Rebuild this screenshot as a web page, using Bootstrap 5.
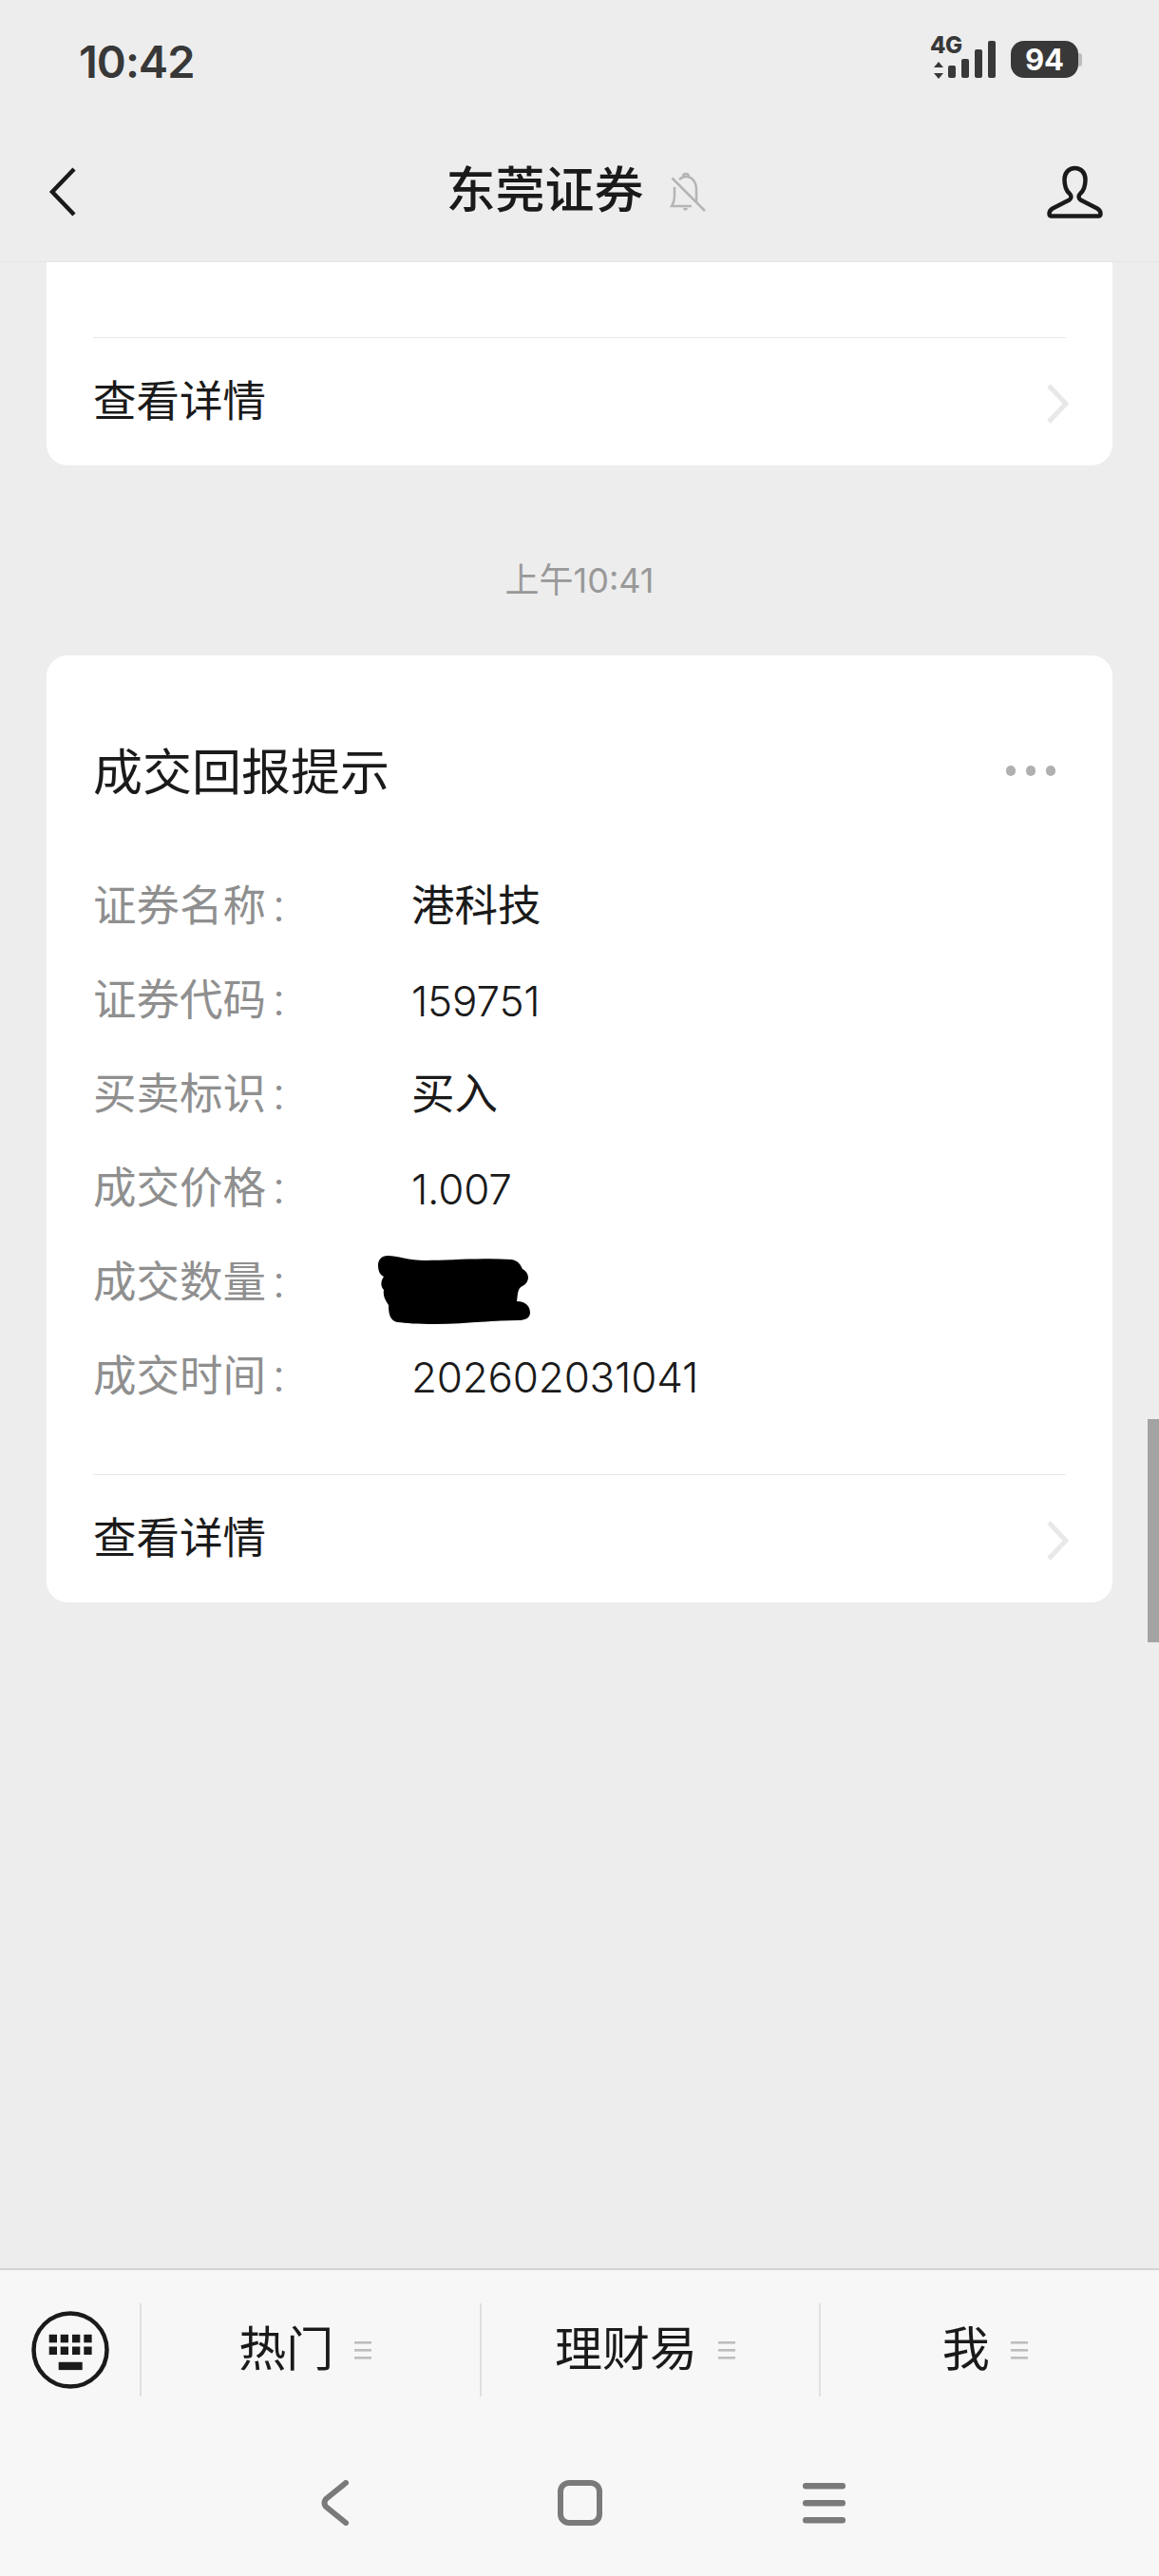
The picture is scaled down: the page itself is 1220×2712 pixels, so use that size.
<!DOCTYPE html>
<html lang="zh-CN">
<head>
  <meta charset="UTF-8" />
  <meta name="viewport" content="width=device-width, initial-scale=1.0" />
  <title>东莞证券</title>
  <link rel="stylesheet" href="https://cdn.jsdelivr.net/npm/bootstrap@5.3.0/dist/css/bootstrap.min.css">
  <style>
    body {
      width: 1220px;
      height: 2712px;
      overflow: hidden;
      background: #ededed;
      color: #1a1a1a;
      font-family: Roboto, "Noto Sans CJK SC", sans-serif;
    }
    .status-bar { height: 128px; padding: 0 81px 0 83px; }
    .status-time { font-family: Inter, sans-serif; font-size: 47px; font-weight: 600; color: #383838; line-height: 1; letter-spacing: -1px; }
    .battery {
      width: 71px; height: 39px; margin: 0 4px 3px 16px;
      background: #383838; border-radius: 14px;
      color: #fff; font-family: Inter, sans-serif; font-size: 31px; font-weight: 700; line-height: 1;
    }
    .battery::after {
      content: ""; position: absolute; right: -4px; top: 13px;
      width: 4px; height: 14px; background: #bdbdbd; border-radius: 0 3px 3px 0;
    }
    .chat-nav { height: 148px; border-bottom: 1px solid #e4e4e4; padding: 0 57px 0 50px; }
    .chat-nav-side { width: 120px; }
    .chat-title { font-size: 52px; font-weight: 500; line-height: 1; margin-right: 26px; }
    .msg-list { padding: 0 49px; overflow: hidden; }
    .msg-card { border: 0; border-radius: 22px; background: #fff; }
    .msg-card-first { border-radius: 0 0 22px 22px; padding-top: 79px; }
    .msg-time { height: 200px; padding-top: 100px; font-family: Inter, "Noto Sans CJK SC", sans-serif; font-size: 36px; line-height: 42px; color: #999; }
    .msg-head { padding: 95px 49px 0 49px; height: 214px; }
    .msg-title { font-size: 52px; line-height: 60px; }
    .msg-dots { gap: 10.5px; margin: 21px 11px 0 0; }
    .msg-dots i { width: 10.5px; height: 10.5px; border-radius: 50%; background: #b0b0b0; }
    .msg-rows { padding: 0 49px 54px 49px; }
    .msg-row { height: 99px; padding-top: 3px; font-size: 45.5px; }
    .msg-label { width: 335px; color: #8f8f8f; }
    .msg-colon { padding-left: 8px; }
    .msg-num { font-family: Inter, sans-serif; font-size: 44px; font-weight: 300; letter-spacing: -0.2px; }
    .msg-redact { margin: 14px 0 0 -35px; }
    .msg-more { height: 135px; margin: 0 49px; padding-top: 3px; border-top: 1px solid #e8e8e8; font-size: 45.5px; }
    .msg-more svg { margin-right: -3px; }
    .scroll-thumb { position: absolute; right: 0; top: 1494px; width: 12px; height: 235px; background: #a3a3a3; }
    .bottom-bar { height: 324px; background: #f7f7f7; border-top: 2px solid #d3d3d3; }
    .tab-row { height: 98px; margin-top: 35px; }
    .tab-kb { width: 147px; }
    .tab-item { font-size: 50px; line-height: 1; border-left: 2px solid #e0e0e0; padding-right: 11px; gap: 22px; }
    .sys-row { margin-top: 88px; height: 48px; }
    .sys-btn { width: 257px; }
  </style>
</head>
<body class="d-flex flex-column position-relative m-0">

  <!-- status bar -->
  <div class="status-bar d-flex align-items-center justify-content-between flex-shrink-0">
    <div class="status-time">10:42</div>
    <div class="d-flex align-items-center">
      <svg width="72" height="72" viewBox="976 28 72 72" fill="#383838">
        <text x="979" y="56" font-family="Inter, sans-serif" font-size="24" font-weight="800" letter-spacing="-0.5">4G</text>
        <path d="M988 65l5 6h-10zM988 83l5-6h-10z"/>
        <rect x="998" y="69" width="8" height="13" rx="2"/>
        <rect x="1012" y="62" width="8" height="20" rx="2"/>
        <rect x="1026" y="52" width="8" height="30" rx="2"/>
        <rect x="1040" y="43" width="8" height="39" rx="2"/>
      </svg>
      <div class="battery position-relative d-flex align-items-center justify-content-center">94</div>
    </div>
  </div>

  <!-- title bar -->
  <div class="chat-nav d-flex align-items-center flex-shrink-0">
    <div class="chat-nav-side d-flex">
      <svg width="32" height="54" viewBox="0 0 32 54" fill="none" stroke="#1a1a1a" stroke-width="4.5">
        <path d="M28 3 L5 27 L28 51"/>
      </svg>
    </div>
    <div class="flex-grow-1 d-flex align-items-center justify-content-center">
      <span class="chat-title">东莞证券</span>
      <svg width="40" height="44" viewBox="25 20 40 44" fill="none" stroke="#b5b5b5" stroke-width="2.5">
        <path d="M31 37V47C31 52 29.5 54 28 57H49"/>
        <path d="M36 29C38 27 40 26 43 26C50 26 54 32 54 40V53"/>
        <path d="M40 26C40 22 46 22 46 26"/>
        <path d="M41 59C41.5 61 43.5 61 44 59"/>
        <path d="M28.5 27.5L63 62"/>
      </svg>
    </div>
    <div class="chat-nav-side d-flex justify-content-end">
      <svg width="62" height="58" viewBox="0 0 62 58" fill="none" stroke="#1a1a1a" stroke-width="4.5">
        <path d="M30.5 4C24 4 19.5 9 19.5 16C19.5 23 21.5 28 25 31C27 33 27 36 24.5 37.5L7 46.5C4.5 48 3.5 50 3.5 52C3.5 53.5 4.5 54.5 6 54.5H55C56.5 54.5 57.5 53.5 57.5 52C57.5 50 56.5 48 54 46.5L36.5 37.5C34 36 34 33 36 31C39.5 28 41.5 23 41.5 16C41.5 9 37 4 30.5 4Z"/>
      </svg>
    </div>
  </div>

  <!-- messages -->
  <div class="msg-list flex-grow-1">
    <div class="card msg-card msg-card-first">
      <div class="msg-more d-flex align-items-center justify-content-between">
        <span>查看详情</span>
        <svg width="24" height="42" viewBox="0 0 24 42" fill="none" stroke="#e8e8e8" stroke-width="5"><path d="M3 2L21 21L3 40"/></svg>
      </div>
    </div>

    <div class="msg-time text-center">上午10:41</div>

    <div class="card msg-card">
      <div class="msg-head d-flex justify-content-between">
        <div class="msg-title">成交回报提示</div>
        <div class="msg-dots d-flex align-items-center align-self-start">
          <i></i><i></i><i></i>
        </div>
      </div>
      <div class="msg-rows">
        <div class="msg-row d-flex align-items-center"><div class="msg-label">证券名称<span class="msg-colon">:</span></div><div>港科技</div></div>
        <div class="msg-row d-flex align-items-center"><div class="msg-label">证券代码<span class="msg-colon">:</span></div><div class="msg-num">159751</div></div>
        <div class="msg-row d-flex align-items-center"><div class="msg-label">买卖标识<span class="msg-colon">:</span></div><div>买入</div></div>
        <div class="msg-row d-flex align-items-center"><div class="msg-label">成交价格<span class="msg-colon">:</span></div><div class="msg-num">1.007</div></div>
        <div class="msg-row d-flex align-items-center">
          <div class="msg-label">成交数量<span class="msg-colon">:</span></div>
          <svg class="msg-redact" width="160" height="72" viewBox="0 0 160 72">
            <path d="M10 0C20 0 32 5 50 5C75 5 110 2 140 4C148 5 150 10 152 14C160 18 160 28 152 32C146 34 147 44 146 48C156 48 160 54 160 60C160 66 154 68 148 68C120 68 90 72 60 72C40 72 30 71 20 70C12 68 11 60 11 52C7 46 5 42 6 36C2 32 3 26 6 22C1 20 0 14 0 10C0 4 4 0 10 0Z" fill="#000"/>
          </svg>
        </div>
        <div class="msg-row d-flex align-items-center"><div class="msg-label">成交时间<span class="msg-colon">:</span></div><div class="msg-num">202602031041</div></div>
      </div>
      <div class="msg-more d-flex align-items-center justify-content-between">
        <span>查看详情</span>
        <svg width="24" height="42" viewBox="0 0 24 42" fill="none" stroke="#e8e8e8" stroke-width="5"><path d="M3 2L21 21L3 40"/></svg>
      </div>
    </div>
  </div>

  <div class="scroll-thumb"></div>

  <!-- menu + system buttons -->
  <div class="bottom-bar flex-shrink-0">
    <div class="tab-row d-flex">
      <div class="tab-kb d-flex align-items-center justify-content-center">
        <svg width="84" height="84" viewBox="0 0 84 84" fill="#1a1a1a">
          <circle cx="42" cy="42" r="38.5" fill="none" stroke="#1a1a1a" stroke-width="4.5"/>
          <rect x="19.7" y="25.8" width="8.3" height="8.5"/><rect x="31.7" y="25.8" width="8.3" height="8.5"/><rect x="44" y="25.8" width="8.3" height="8.5"/><rect x="56.3" y="25.8" width="8.3" height="8.5"/>
          <rect x="19.7" y="38.5" width="8.3" height="8.5"/><rect x="31.7" y="38.5" width="8.3" height="8.5"/><rect x="44" y="38.5" width="8.3" height="8.5"/><rect x="56.3" y="38.5" width="8.3" height="8.5"/>
          <rect x="29.7" y="54.8" width="25" height="8.3"/>
        </svg>
      </div>
      <div class="tab-item flex-fill w-25 d-flex align-items-center justify-content-center">
        <span>热门</span>
        <svg width="18" height="20" viewBox="0 0 18 20" fill="#bdbdbd"><rect y="1" width="18" height="2.6"/><rect y="9" width="18" height="2.6"/><rect y="17" width="18" height="2.6"/></svg>
      </div>
      <div class="tab-item flex-fill w-25 d-flex align-items-center justify-content-center">
        <span>理财易</span>
        <svg width="18" height="20" viewBox="0 0 18 20" fill="#bdbdbd"><rect y="1" width="18" height="2.6"/><rect y="9" width="18" height="2.6"/><rect y="17" width="18" height="2.6"/></svg>
      </div>
      <div class="tab-item flex-fill w-25 d-flex align-items-center justify-content-center">
        <span>我</span>
        <svg width="18" height="20" viewBox="0 0 18 20" fill="#bdbdbd"><rect y="1" width="18" height="2.6"/><rect y="9" width="18" height="2.6"/><rect y="17" width="18" height="2.6"/></svg>
      </div>
    </div>
    <div class="sys-row d-flex justify-content-center">
      <div class="sys-btn d-flex justify-content-center">
        <svg width="30" height="48" viewBox="0 0 30 48" fill="none" stroke="#7a7a7a" stroke-width="6" stroke-linecap="round" stroke-linejoin="round"><path d="M26 3L5 20Q2 24 5 28L26 45"/></svg>
      </div>
      <div class="sys-btn d-flex justify-content-center">
        <svg width="47" height="48" viewBox="0 0 47 48" fill="none" stroke="#7a7a7a" stroke-width="6"><rect x="3" y="3" width="41" height="42" rx="9"/></svg>
      </div>
      <div class="sys-btn d-flex justify-content-center">
        <svg width="45" height="48" viewBox="0 0 45 48" fill="#7a7a7a"><rect y="3" width="45" height="6.5" rx="3"/><rect y="21" width="45" height="6.5" rx="3"/><rect y="39" width="45" height="6.5" rx="3"/></svg>
      </div>
    </div>
  </div>

  <script src="https://cdn.jsdelivr.net/npm/bootstrap@5.3.0/dist/js/bootstrap.bundle.min.js"></script>
</body>
</html>
